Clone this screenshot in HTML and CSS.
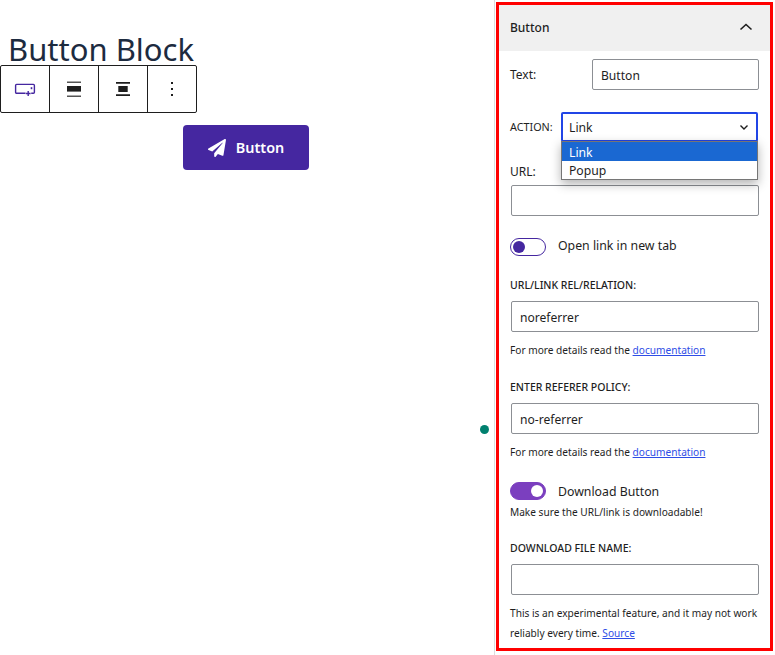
FILE: index.html
```html
<!DOCTYPE html>
<html lang="en">
<head>
    <meta charset="UTF-8">
    <meta name="viewport" content="width=device-width, initial-scale=1.0">
    <title>Button Block</title>
    <link rel="stylesheet" href="styles.css">
</head>
<body>
    <div class="page">
        <main class="editor">
            <h1 class="title">Button Block</h1>
            <div class="toolbar">
                <button class="tool">
                    <svg width="24" height="24" viewBox="0 0 24 24" fill="none" stroke="#4527a0" stroke-width="1.4"><path d="M12.5 16.3H3.6a1 1 0 0 1-1-1V8.4a1 1 0 0 1 1-1h16.8a1 1 0 0 1 1 1v6.9a1 1 0 0 1-1 1h-2.2"/><path d="M15.2 14v5M12.8 16.5h4.8" stroke-width="1.4"/><path d="M18.5 10.2v2" stroke-width="1.6"/></svg>
                </button>
                <button class="tool">
                    <svg width="24" height="24" viewBox="0 0 24 24"><path d="M5 4.6h14V6H5zM5 18.6h14V20H5z" fill="#555"/><path d="M5 9h14v5.6H5z" fill="#1e1e1e"/></svg>
                </button>
                <button class="tool">
                    <svg width="24" height="24" viewBox="0 0 24 24"><path d="M5 5h14v1.8H5zM7.3 9h9.4v6H7.3zM5 17.2h14V19H5z" fill="#1e1e1e"/></svg>
                </button>
                <button class="tool">
                    <svg width="24" height="24" viewBox="0 0 24 24"><path d="M11 5h2v2h-2zM11 11h2v2h-2zM11 17h2v2h-2z" fill="#1e1e1e"/></svg>
                </button>
            </div>
            <div class="button-row">
                <a class="block-button">
                    <svg width="18" height="18" viewBox="0 0 512 512"><path d="M476 3L12 271c-18 10-16 35 3 43l106 44 287-253c6-5 14 3 9 9L176 408v80c0 23 28 32 42 15l63-77 125 52c14 6 31-3 33-18L511 28c4-19-17-34-35-25z" fill="#fff"/></svg>
                    <span>Button</span>
                </a>
            </div>
            <span class="dot"></span>
        </main>

        <aside class="sidebar">
            <div class="panel">
                <div class="panel-head">
                    <span>Button</span>
                    <svg width="24" height="24" viewBox="0 0 24 24"><path d="M6.5 14.5L12 9.5l5.5 5" fill="none" stroke="#1e1e1e" stroke-width="1.6"/></svg>
                </div>
                <div class="panel-body">
                    <div class="row-text">
                        <label class="lbl">Text:</label>
                        <input class="field field-short" value="Button">
                    </div>
                    <div class="row-action">
                        <label class="lbl-small">ACTION:</label>
                        <div class="select-wrap">
                            <div class="select">
                                <span>Link</span>
                                <svg width="12" height="12" viewBox="0 0 12 12"><path d="M2.5 4.5L6 8l3.5-3.5" fill="none" stroke="#1e1e1e" stroke-width="1.4"/></svg>
                            </div>
                            <ul class="options">
                                <li class="selected">Link</li>
                                <li>Popup</li>
                            </ul>
                        </div>
                    </div>
                    <label class="lbl url-lbl">URL:</label>
                    <input class="field">
                    <div class="toggle-row first-toggle">
                        <span class="toggle"></span>
                        <span class="toggle-text">Open link in new tab</span>
                    </div>
                    <label class="caps rel-lbl">URL/LINK REL/RELATION:</label>
                    <input class="field" value="noreferrer">
                    <p class="help">For more details read the <a href="#">documentation</a></p>
                    <label class="caps policy-lbl">ENTER REFERER POLICY:</label>
                    <input class="field" value="no-referrer">
                    <p class="help">For more details read the <a href="#">documentation</a></p>
                    <div class="toggle-row second-toggle">
                        <span class="toggle on"></span>
                        <span>Download Button</span>
                    </div>
                    <p class="help tight">Make sure the URL/link is downloadable!</p>
                    <label class="caps file-lbl">DOWNLOAD FILE NAME:</label>
                    <input class="field">
                    <p class="help note">This is an experimental feature, and it may not work<br>reliably every time. <a href="#">Source</a></p>
                </div>
            </div>
        </aside>
    </div>
</body>
</html>
```

FILE: styles.css
```css
* {
    box-sizing: border-box;
}

html, body {
    margin: 0;
    height: 655px;
    overflow: hidden;
    background: #fff;
    font-family: "Noto Sans", "Open Sans", sans-serif;
    color: #1e1e1e;
}

.page {
    display: flex;
    height: 655px;
}

.editor {
    position: relative;
    width: 494px;
    padding-top: 32px;
}

.title {
    margin: 0 0 0 8px;
    font-size: 31px;
    line-height: 34px;
    font-weight: 400;
    color: #1d2b3f;
}

.toolbar {
    display: flex;
    width: 197px;
    height: 48px;
    border: 1px solid #1e1e1e;
    border-radius: 2px;
    background: #fff;
    margin-top: -1px;
}

.tool {
    flex: 1;
    display: flex;
    align-items: center;
    justify-content: center;
    padding: 0;
    background: none;
    border: 0;
    border-right: 1px solid #1e1e1e;
}

.tool:last-child {
    border-right: 0;
}

.button-row {
    display: flex;
    margin: 12px 0 0 183px;
}

.block-button {
    display: flex;
    align-items: center;
    justify-content: center;
    gap: 10px;
    width: 126px;
    height: 45px;
    border-radius: 4px;
    background: #4527a0;
    color: #fff;
    font-size: 14.4px;
    font-weight: 600;
}

.dot {
    position: absolute;
    left: 480px;
    top: 425px;
    width: 9px;
    height: 9px;
    border-radius: 50%;
    background: #00806f;
}

.sidebar {
    width: 281px;
    height: 655px;
    padding: 2px 0 0 1px;
    border-left: 1px solid #ddd;
}

.panel {
    width: 277px;
    height: 649px;
    border: 3px solid #f00;
}

.panel-head {
    display: flex;
    align-items: center;
    justify-content: space-between;
    height: 46px;
    padding: 0 12px 2px 11px;
    background: #f0f0f0;
    font-size: 12px;
    font-weight: 500;
}

.panel-body {
    padding: 8px 10px 0 12px;
    font-size: 12px;
}

.field {
    display: block;
    width: 248px;
    height: 31px;
    padding: 1px 8px 0;
    border: 1px solid #8c8f94;
    border-radius: 2px;
    font: inherit;
    font-size: 12.1px;
    color: #1e1e1e;
    background: #fff;
}

.row-text {
    display: flex;
    justify-content: space-between;
    align-items: flex-start;
    width: 249px;
    margin-left: -1px;
}

.row-text .lbl {
    margin-top: 7px;
}

.field-short {
    width: 167px;
}

.lbl {
    display: block;
    font-size: 12px;
    line-height: 18px;
}

.row-action {
    display: flex;
    align-items: center;
    justify-content: space-between;
    width: 248px;
    margin: 22px 0 0 -1px;
}

.lbl-small {
    padding-bottom: 2px;
    font-size: 10.8px;
}

.select-wrap {
    position: relative;
    width: 197px;
}

.select {
    display: flex;
    align-items: center;
    justify-content: space-between;
    height: 30px;
    padding: 0 6px;
    border: 2px solid #2145e6;
    border-radius: 2px;
    font-size: 12.2px;
}

.options {
    position: absolute;
    z-index: 2;
    left: 0;
    top: 29px;
    width: 197px;
    height: 39px;
    margin: 0;
    padding: 0;
    list-style: none;
    background: #fff;
    border: 1px solid #767676;
    box-shadow: 0 4px 10px rgba(0, 0, 0, 0.3);
    font-size: 12.2px;
}

.options li {
    height: 18.5px;
    padding: 1px 7px 0;
    line-height: 18px;
}

.options .selected {
    padding-top: 2px;
    background: #1a68d2;
    color: #fff;
}

.url-lbl {
    margin: 21px 0 0 -1px;
    height: 22px;
}

.toggle-row {
    display: flex;
    align-items: center;
    gap: 12px;
    font-size: 12.3px;
    margin-left: -1px;
}

.toggle-text {
    margin-top: -3px;
}

.first-toggle {
    margin-top: 22px;
}

.second-toggle {
    margin-top: 22px;
}

.toggle {
    position: relative;
    width: 36px;
    height: 18px;
    border: 1px solid #4527a0;
    border-radius: 9px;
    background: #fff;
}

.toggle::after {
    content: "";
    position: absolute;
    left: 2px;
    top: 2px;
    width: 12px;
    height: 12px;
    border-radius: 50%;
    background: #4527a0;
}

.toggle.on {
    border-color: #7b3fbf;
    background: #7b3fbf;
}

.toggle.on::after {
    left: 20px;
    background: #fff;
}

.caps {
    display: block;
    height: 23px;
    margin-left: -1px;
    font-size: 10.5px;
    font-weight: 500;
    line-height: 15px;
}

.rel-lbl {
    margin-top: 22px;
}

.policy-lbl {
    margin-top: 22px;
}

.file-lbl {
    margin-top: 21px;
}

.help {
    margin: 10px 0 0 -1px;
    font-size: 10.15px;
    line-height: 16px;
}

.help a {
    color: #2e4de6;
}

.tight {
    margin-top: 4px;
}

.note {
    margin-top: 8px;
    line-height: 20px;
    white-space: nowrap;
}
```
